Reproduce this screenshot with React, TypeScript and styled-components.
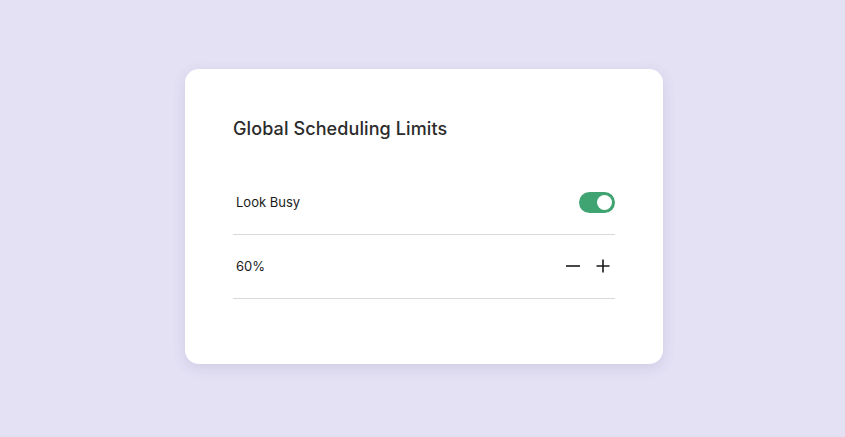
import styled, { createGlobalStyle } from "styled-components";

const GlobalStyle = createGlobalStyle`
  html, body {
    margin: 0;
    padding: 0;
    background: #e4e1f4;
  }
  body {
    font-family: Inter, "Noto Sans", sans-serif;
  }
`;

const Page = styled.div`
  width: 845px;
  height: 437px;
  display: flex;
  align-items: center;
  justify-content: center;
`;

const Card = styled.div`
  box-sizing: border-box;
  width: 478px;
  height: 295px;
  margin-left: 3px;
  margin-top: -5px;
  padding: 48px 48px 0 48px;
  background: #ffffff;
  border-radius: 14px;
  box-shadow: 0 4px 14px rgba(90, 80, 140, 0.14);
`;

const Title = styled.h2`
  margin: 0;
  font-size: 18px;
  line-height: 24px;
  font-weight: 500;
  color: #2b2b2b;
  letter-spacing: 0.1px;
`;

const List = styled.div`
  margin-top: 30px;
  display: flex;
  flex-direction: column;
`;

const Row = styled.div`
  display: flex;
  align-items: center;
  justify-content: space-between;
  height: 63px;
  border-bottom: 1px solid #d9d9d9;
`;

const Label = styled.span`
  font-size: 13px;
  color: #1a1a1a;
  padding-left: 3px;
`;

const Switch = styled.div<{ $on: boolean }>`
  width: 36px;
  height: 21px;
  border-radius: 11px;
  background: ${(p) => (p.$on ? "#3fa372" : "#cccccc")};
  display: flex;
  align-items: center;
  justify-content: ${(p) => (p.$on ? "flex-end" : "flex-start")};
  padding: 0 3px;
  box-sizing: border-box;
`;

const Knob = styled.div`
  width: 15px;
  height: 15px;
  border-radius: 50%;
  background: #ffffff;
`;

const Stepper = styled.div`
  display: flex;
  align-items: center;
  gap: 15px;
  margin-right: 4px;
`;

const StepButton = styled.button`
  border: none;
  background: none;
  padding: 0;
  width: 16px;
  height: 16px;
  display: flex;
  align-items: center;
  justify-content: center;
  cursor: pointer;
`;

function App() {
  return (
    <>
      <GlobalStyle />
      <Page>
        <Card>
          <Title>Global Scheduling Limits</Title>
          <List>
            <Row>
              <Label>Look Busy</Label>
              <Switch $on>
                <Knob />
              </Switch>
            </Row>
            <Row>
              <Label>60%</Label>
              <Stepper>
                <StepButton aria-label="decrease">
                  <svg width="16" height="16" viewBox="0 0 16 16">
                    <path d="M2 8h14" stroke="#1a1a1a" strokeWidth="1.6" />
                  </svg>
                </StepButton>
                <StepButton aria-label="increase">
                  <svg width="16" height="16" viewBox="0 0 16 16">
                    <path d="M1.5 8h13M8 1.5v13" stroke="#1a1a1a" strokeWidth="1.6" />
                  </svg>
                </StepButton>
              </Stepper>
            </Row>
          </List>
        </Card>
      </Page>
    </>
  );
}

export default App;
